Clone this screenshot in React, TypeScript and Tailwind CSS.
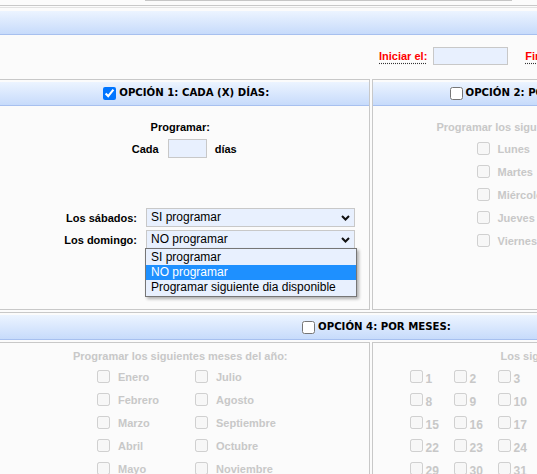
import React from 'react'

const weekdays = ['Lunes', 'Martes', 'Miércoles', 'Jueves', 'Viernes']
const months = [
  ['Enero', 'Julio'],
  ['Febrero', 'Agosto'],
  ['Marzo', 'Septiembre'],
  ['Abril', 'Octubre'],
  ['Mayo', 'Noviembre'],
  ['Junio', 'Diciembre'],
]
const days = Array.from({ length: 31 }, (_, i) => i + 1)

const headerBar = 'border-b border-[#a7c0ef] bg-gradient-to-b from-[#ecf4ff] to-[#c7dbfb]'
const headerFont = "font-['DejaVu_Sans_Condensed','DejaVu_Sans',sans-serif] [font-stretch:condensed] text-[11.3px] font-bold text-black"

function Chevron() {
  return (
    <svg width="9" height="6" viewBox="0 0 9 6" className="absolute right-[4px] top-[6px]">
      <path d="M1 1 L4.5 4.5 L8 1" fill="none" stroke="#111" strokeWidth="2" />
    </svg>
  )
}

function PanelHeader({ title, checked, className = '' }: { title: string; checked?: boolean; className?: string }) {
  return (
    <div className={`mt-[2px] h-[24px] flex items-center ${headerBar} ${className}`}>
      <input type="checkbox" defaultChecked={checked} className="ml-[4px] mr-[3px] w-[13px] h-[13px]" />
      <span className={`${headerFont} whitespace-nowrap`}>{title}</span>
    </div>
  )
}

function Field({ label }: { label: string }) {
  return (
    <div className="flex items-center h-[18px]">
      <span className="text-[11px] font-bold text-[#ff0000] underline decoration-dotted decoration-[#333] underline-offset-[3px] whitespace-nowrap">
        {label}
      </span>
      <input type="text" className="ml-[6px] w-[75px] h-[18px] border border-[#c8c8c8] bg-[#e8f0fe]" />
    </div>
  )
}

function DisabledCheck({ label, labelClass = '' }: { label: string | number; labelClass?: string }) {
  return (
    <label className="flex items-center text-[11px] font-bold text-[#c8c8c8] whitespace-nowrap">
      <input type="checkbox" disabled className="m-0 w-[13px] h-[13px]" />
      <span className={labelClass}>{label}</span>
    </label>
  )
}

export default function App() {
  return (
    <div className="w-[537px] h-[474px] overflow-hidden bg-[#fbfbfb] font-['Liberation_Sans',Arial,sans-serif] text-black">
      <div className="w-[751px] -ml-px">
        <div className="ml-[146px] w-[367px] h-px bg-[#c6c6c6]" />
        <div className="mt-[4px] h-px bg-[#c8c8c8]" />
        <div className="mt-px h-px bg-[#e3e3e3]" />
        <div className={`mt-[3px] h-[24px] ${headerBar}`} />

        <div className="h-[44px] pt-[12px] pl-[380px] flex items-start gap-[17px]">
          <Field label="Iniciar el:" />
          <Field label="Finalizar el:" />
        </div>

        {/* fila superior: opción 1 y opción 2 */}
        <div className="flex gap-[2px] h-[231px]">
          <div className="w-[371px] border border-[#c8c8c8]">
            <PanelHeader title="OPCIÓN 1: CADA (X) DÍAS:" checked className="justify-center" />
            <div className="pt-[14px] text-[11px] font-bold leading-[14px]">
              <div className="text-center pr-[8px]">Programar:</div>
              <div className="mt-[5px] flex items-center justify-center gap-[9px]">
                <span>Cada</span>
                <input type="text" className="w-[39px] h-[19px] border border-[#c8c8c8] bg-[#e8f0fe]" />
                <span className="ml-[-1px]">días</span>
              </div>
              <div className="mt-[50px] flex items-center">
                <span className="w-[137px] text-right">Los sábados:</span>
                <div className="relative ml-[9px] w-[209px] h-[19px] border border-[#c8c8c8] bg-[#e8f0fe] pl-[4px] text-[12px] font-normal leading-[17px]">
                  SI programar
                  <Chevron />
                </div>
              </div>
              <div className="mt-[3px] flex items-center">
                <span className="w-[137px] text-right">Los domingo:</span>
                <div className="relative ml-[9px] w-[209px] h-[19px] border border-[#c8c8c8] bg-[#e8f0fe] pl-[4px] text-[12px] font-normal leading-[17px]">
                  NO programar
                  <Chevron />
                  <div className="absolute left-[-2px] top-[17px] w-[212px] py-px border border-[#767676] bg-[#e8f0fe] shadow-[2px_2px_3px_rgba(0,0,0,0.3)] z-10">
                    <div className="h-[15px] leading-[15px] pl-[5px]">SI programar</div>
                    <div className="h-[15px] leading-[15px] pl-[5px] bg-[#1e90ff] text-white">NO programar</div>
                    <div className="h-[15px] leading-[15px] pl-[5px] whitespace-nowrap">Programar siguiente dia disponible</div>
                  </div>
                </div>
              </div>
            </div>
          </div>

          <div className="w-[379px] border border-[#c8c8c8]">
            <PanelHeader title="OPCIÓN 2: POR DÍAS DE LA SEMANA:" className="pl-[73px]" />
            <div className="pt-[14px] leading-[14px]">
              <div className="pl-[64px] text-[11px] font-bold text-[#c8c8c8] whitespace-nowrap">
                Programar los siguientes días de la semana:
              </div>
              <div className="mt-[3px] pl-[104px]">
                {weekdays.map(d => (
                  <div key={d} className="h-[23px] flex items-center">
                    <DisabledCheck label={d} labelClass="ml-[8px]" />
                  </div>
                ))}
              </div>
            </div>
          </div>
        </div>

        {/* opción 4 */}
        <div className="mt-[2px] border-t border-[#c8c8c8]">
          <PanelHeader title="OPCIÓN 4: POR MESES:" className="justify-center h-[25px]" />
          <div className="mt-[2px] flex gap-[2px] h-[140px]">
            <div className="w-[371px] border border-[#c8c8c8] pt-[6px] leading-[14px]">
              <div className="text-center pr-[8px] text-[11px] font-bold text-[#c8c8c8] whitespace-nowrap">
                Programar los siguientes meses del año:
              </div>
              <div className="mt-[2px] pl-[97px] grid grid-cols-[98px_98px]">
                {months.map(([a, b]) => (
                  <React.Fragment key={a}>
                    <div className="h-[23px] flex items-center">
                      <DisabledCheck label={a} labelClass="ml-[8px]" />
                    </div>
                    <div className="h-[23px] flex items-center">
                      <DisabledCheck label={b} labelClass="ml-[8px]" />
                    </div>
                  </React.Fragment>
                ))}
              </div>
            </div>
            <div className="w-[379px] border border-[#c8c8c8] pt-[6px] leading-[14px]">
              <div className="pl-[128px] text-[11px] font-bold text-[#c8c8c8] whitespace-nowrap">
                Los siguientes días del mes:
              </div>
              <div className="mt-[2px] pl-[37px] grid grid-cols-[repeat(7,44px)]">
                {days.map(n => (
                  <div key={n} className="h-[23px] flex items-center">
                    <DisabledCheck label={n} labelClass="ml-[3px] mt-[4px] text-[12px]" />
                  </div>
                ))}
              </div>
            </div>
          </div>
        </div>
      </div>
    </div>
  )
}
